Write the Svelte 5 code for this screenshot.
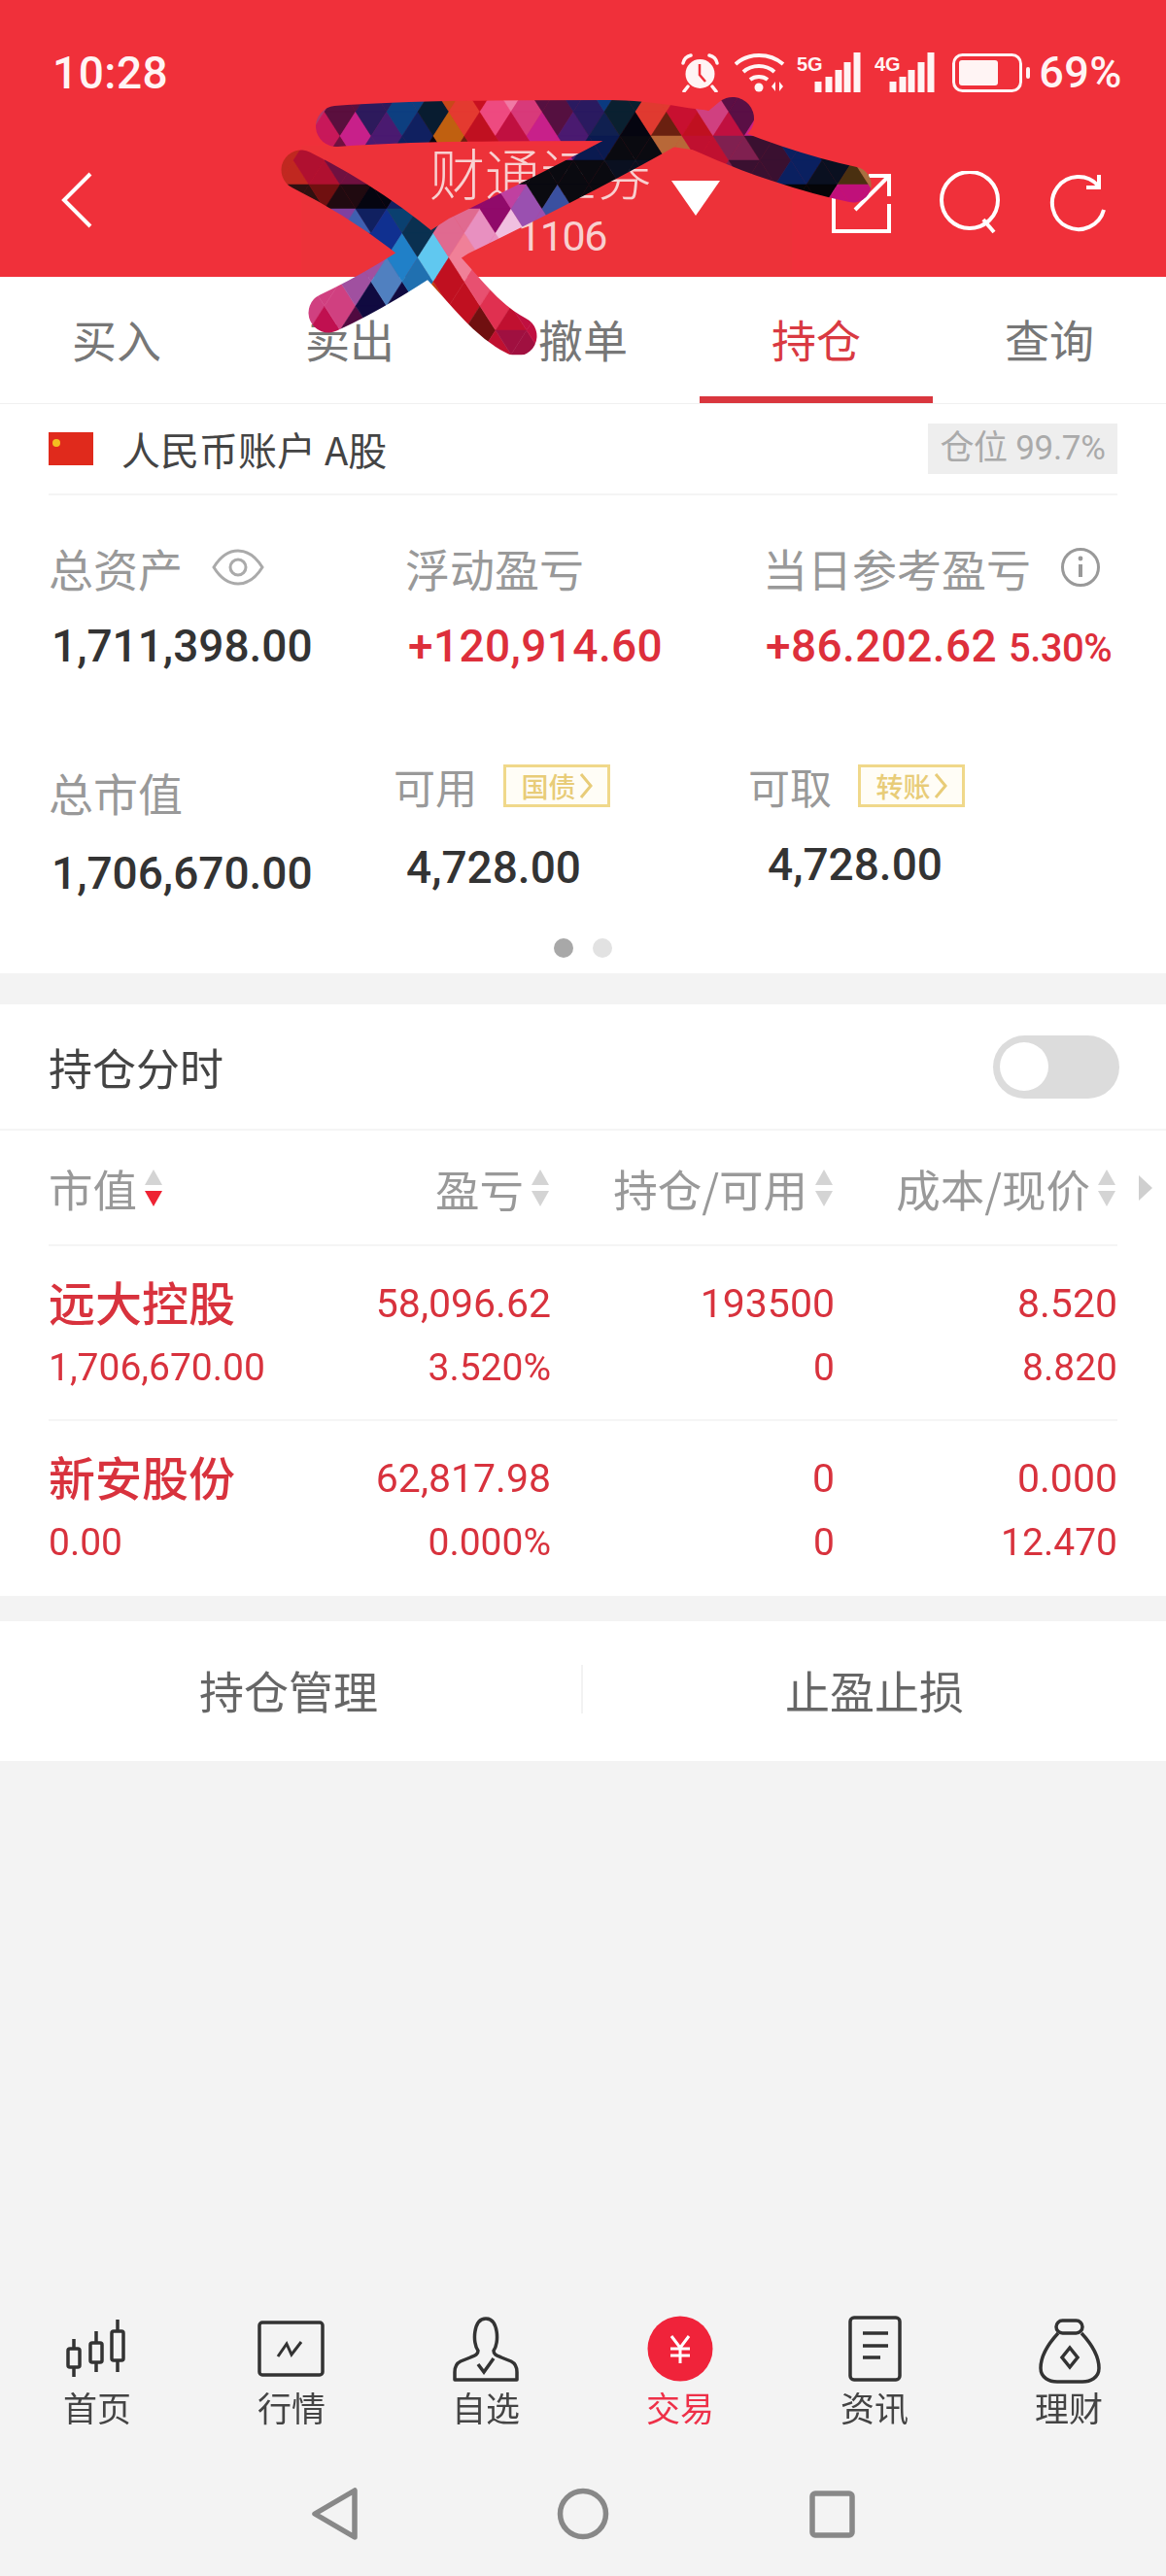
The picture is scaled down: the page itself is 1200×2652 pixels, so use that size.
<script>
  const tabs = [
    { label: '买入' }, { label: '卖出' }, { label: '撤单' }, { label: '持仓', active: true }, { label: '查询' }
  ];
  const rows = [
    { name: '远大控股', value: '1,706,670.00', a: '58,096.62', b: '3.520%', c: '193500', d: '0', e: '8.520', f: '8.820' },
    { name: '新安股份', value: '0.00', a: '62,817.98', b: '0.000%', c: '0', d: '0', e: '0.000', f: '12.470' }
  ];
  const bars5 = [[22, 85], [33, 80], [43, 73], [52, 65], [62, 55]];
  const bars4 = [[19, 85], [29, 80], [38, 73], [48, 65], [58, 55]];

  // Mosaic colours of the censoring scribble: [x, y, colour]
  const anchors = [
    [337,117,'#b03a6e'],[358,117,'#5a0f3e'],[388,117,'#2d1a5c'],[417,117,'#0d3f80'],[443,117,'#081c30'],[464,117,'#c8481a'],[480,117,'#e43a30'],[493,117,'#c81020'],[510,117,'#ee4a80'],[523,117,'#f07aa5'],[539,117,'#d83a7a'],[560,117,'#551040'],[590,117,'#2a1a60'],[624,117,'#0a3a80'],[649,117,'#0a2030'],[674,117,'#e03a30'],[700,117,'#c81030'],[733,117,'#d04080'],[758,117,'#5a0f45'],
    [337,137,'#c8185a'],[363,137,'#c8208a'],[388,137,'#4a1a70'],[417,137,'#102060'],[443,137,'#050510'],[464,137,'#c06010'],[480,137,'#6a2010'],[506,137,'#c01020'],[531,137,'#c01040'],[560,137,'#c8208a'],[590,137,'#4a1a70'],[624,137,'#102050'],[649,137,'#050510'],[666,137,'#c06010'],[691,137,'#6a2010'],[720,137,'#c01020'],[741,137,'#c01040'],[763,137,'#c8208a'],
    [758,152,'#802050'],[733,152,'#c01030'],[691,155,'#b86838'],[655,155,'#0a0a10'],[620,160,'#0a1a50'],
    [788,165,'#3a1030'],[817,165,'#0a2060'],[850,175,'#0a1020'],[860,190,'#050508'],[880,188,'#4a3010'],[893,188,'#a87040'],[872,205,'#c0107a'],
    [544,190,'#0a0a10'],[600,190,'#0a0a10'],[650,178,'#0a1020'],[497,215,'#900a6a'],[523,215,'#c040a0'],[544,215,'#9a50b0'],[573,215,'#3a50a0'],
    [468,240,'#e06a90'],[489,240,'#e890c0'],[531,240,'#f0c0e0'],[476,265,'#f08098'],[417,265,'#2080c8'],[447,265,'#60c8f0'],
    [367,290,'#a050a0'],[405,290,'#5080c0'],[430,290,'#2070b0'],[337,315,'#d04080'],[363,315,'#500a40'],[396,315,'#100a40'],[337,338,'#c01050'],
    [300,175,'#c02820'],[325,175,'#b01030'],[350,175,'#701040'],[308,195,'#301010'],[329,195,'#701010'],[354,195,'#200a10'],[379,195,'#050510'],
    [342,215,'#8040a0'],[367,215,'#4060b0'],[396,215,'#102060'],[384,240,'#103090'],[417,240,'#0a4070'],[438,240,'#0a3050'],
    [460,290,'#c01020'],[485,290,'#e85070'],[460,315,'#c04010'],[485,315,'#c01020'],[510,315,'#e03050'],[489,340,'#701010'],[514,340,'#c01030'],[540,340,'#c01040'],[531,360,'#a01040']
  ];
  function colourAt(x, y) {
    let best = anchors[0][2], bd = Infinity;
    for (const [ax, ay, c] of anchors) {
      const d = (ax - x) ** 2 + 2 * (ay - y) ** 2;
      if (d < bd) { bd = d; best = c; }
    }
    return best;
  }
  const tris = [];
  const W = 32, H = 25;
  for (let r = 0; r < 11; r++) {
    const y = 90 + r * H;
    const off = r % 2 ? W / 2 : 0;
    for (let i = -1; i < 22; i++) {
      const x = 270 + off + i * W;
      tris.push({ p: `${x},${y + H} ${x + W},${y + H} ${x + W / 2},${y}`, c: colourAt(x + W / 2, y + H * 0.6) });
      tris.push({ p: `${x + W / 2},${y} ${x + W * 1.5},${y} ${x + W},${y + H}`, c: colourAt(x + W, y + H * 0.4) });
    }
  }
</script>

{#snippet sort(active)}
  <svg class="sort" viewBox="0 0 22 40" width="22" height="40" aria-hidden="true">
    <polygon points="11,1 20,17 2,17" fill="#d4d4d4" />
    <polygon points="2,23 20,23 11,39" fill={active ? '#ee2233' : '#d4d4d4'} />
  </svg>
{/snippet}

{#snippet chevron()}
  <svg class="chev" width="14" height="28" viewBox="0 0 14 28" aria-hidden="true">
    <path d="M2 2 L12 14 L2 26" fill="none" stroke="#e8cc78" stroke-width="3" />
  </svg>
{/snippet}

<div class="page">
  <div class="content">
    <header class="top">
      <div class="status">
        <span class="time">10:28</span>
        <div class="status-right">
          <svg width="39" height="40" viewBox="0 0 39 40" class="s-alarm">
            <circle cx="19.5" cy="21" r="15" fill="#fff4f4" />
            <path d="M19 11 V22 L25 29" fill="none" stroke="#f0303a" stroke-width="2.5" />
            <path d="M2 10 C3 5 6 3 10 2 M37 10 C36 5 33 3 29 2 M7 34 L3 39 M32 34 L36 39" fill="none" stroke="#fff4f4" stroke-width="3.5" stroke-linecap="round" />
          </svg>
          <svg width="52" height="40" viewBox="0 0 52 40" class="s-wifi">
            <path d="M1 11 C14 -1 36 -1 50 11 M9 19 C18 11 32 11 41 19 M16 27 C21 23 29 23 34 27" fill="none" stroke="#fff4f4" stroke-width="4" />
            <circle cx="25" cy="35" r="4.5" fill="#fff4f4" />
            <path d="M42 29 L38 34 L42 39 Z M46 29 L50 34 L46 39 Z" fill="#fff4f4" />
          </svg>
          <svg width="66" height="42" viewBox="0 0 66 42" class="s-sig1">
            <text x="0" y="19" class="sigtext">5G</text>
            {#each bars5 as [x, t]}<rect x={x - 3.5} y={t - 55} width="7" height={96 - t} fill="#fff4f4" />{/each}
          </svg>
          <svg width="62" height="42" viewBox="0 0 62 42" class="s-sig2">
            <text x="0" y="19" class="sigtext">4G</text>
            {#each bars4 as [x, t]}<rect x={x - 3.5} y={t - 55} width="7" height={96 - t} fill="#fff4f4" />{/each}
          </svg>
          <svg width="82" height="40" viewBox="0 0 82 40" class="s-bat">
            <rect x="1.5" y="1.5" width="69" height="37" rx="9" fill="none" stroke="#fff4f4" stroke-width="3" />
            <rect x="7" y="7" width="40" height="26" rx="3" fill="#fff4f4" />
            <rect x="76" y="14" width="4" height="12" rx="2" fill="#fff4f4" />
          </svg>
          <span class="pct">69%</span>
        </div>
      </div>
      <div class="nav">
        <svg class="back" width="34" height="58" viewBox="0 0 34 58">
          <path d="M31 2 L4 29 L31 56" fill="none" stroke="#fff" stroke-width="4" />
        </svg>
        <div class="title">
          <div class="title-top">
            <span class="broker">财通证券</span>
            <svg width="54" height="40" viewBox="0 0 54 40"><polygon points="2,2 52,2 27,38" fill="#fff" /></svg>
          </div>
          <span class="acct">1106</span>
        </div>
        <div class="nav-icons">
          <svg width="62" height="62" viewBox="0 0 62 62">
            <path d="M34 12 H2 V60 H59 V32" fill="none" stroke="#fff" stroke-width="4" />
            <path d="M24 38 L58 4 M38 3 H59 V24" fill="none" stroke="#fff" stroke-width="4" />
          </svg>
          <svg width="66" height="66" viewBox="0 0 66 66">
            <circle cx="32" cy="30" r="29" fill="none" stroke="#fff" stroke-width="4" />
            <path d="M46 50 L57 63" stroke="#fff" stroke-width="4" />
          </svg>
          <svg width="60" height="62" viewBox="0 0 60 62">
            <path d="M56 38 A27 27 0 1 1 50 13" fill="none" stroke="#fff" stroke-width="4" />
            <path d="M51 2 V15 H38" fill="none" stroke="#fff" stroke-width="4" />
          </svg>
        </div>
      </div>
    </header>

    <nav class="tabs">
      {#each tabs as t}
        <div class="tab" class:active={t.active}>{t.label}</div>
      {/each}
    </nav>

    <section class="summary">
      <div class="account">
        <div class="acc-left">
          <svg width="46" height="34" viewBox="0 0 46 34">
            <rect width="46" height="34" fill="#e02a1c" />
            <circle cx="8" cy="11" r="4" fill="#f4c020" />
          </svg>
          <span>人民币账户 A股</span>
        </div>
        <span class="ratio">仓位 99.7%</span>
      </div>

      <div class="stat-row one">
        <div class="stat">
          <div class="label">总资产
            <svg class="eye" width="54" height="38" viewBox="0 0 54 38">
              <path d="M2 19 C10 6 18 2 27 2 C36 2 44 6 52 19 C44 32 36 36 27 36 C18 36 10 32 2 19 Z" fill="none" stroke="#aaa" stroke-width="3" />
              <circle cx="27" cy="19" r="8" fill="none" stroke="#aaa" stroke-width="3" />
            </svg>
          </div>
          <div class="num">1,711,398.00</div>
        </div>
        <div class="stat">
          <div class="label">浮动盈亏</div>
          <div class="num red">+120,914.60</div>
        </div>
        <div class="stat">
          <div class="label">当日参考盈亏
            <svg class="info" width="42" height="42" viewBox="0 0 42 42">
              <circle cx="21" cy="21" r="18.5" fill="none" stroke="#999" stroke-width="3" />
              <circle cx="21" cy="12" r="2.4" fill="#999" />
              <path d="M21 18 V31" stroke="#999" stroke-width="4" />
            </svg>
          </div>
          <div class="num red">+86.202.62 <small>5.30%</small></div>
        </div>
      </div>

      <div class="stat-row two">
        <div class="stat">
          <div class="label">总市值</div>
          <div class="num">1,706,670.00</div>
        </div>
        <div class="stat mid">
          <div class="label raised">可用 <span class="gold">国债{@render chevron()}</span></div>
          <div class="num nudge-a">4,728.00</div>
        </div>
        <div class="stat end">
          <div class="label raised">可取 <span class="gold">转账{@render chevron()}</span></div>
          <div class="num nudge-b">4,728.00</div>
        </div>
      </div>

      <div class="dots"><span class="dot on"></span><span class="dot"></span></div>
    </section>

    <section class="holdings">
      <div class="hold-head">
        <span>持仓分时</span>
        <div class="toggle"><span class="knob"></span></div>
      </div>
      <div class="table-head">
        <div class="cell left">市值{@render sort(true)}</div>
        <div class="cell">盈亏{@render sort(false)}</div>
        <div class="cell">持仓/可用{@render sort(false)}</div>
        <div class="cell">成本/现价{@render sort(false)}</div>
        <svg class="more" width="14" height="26" viewBox="0 0 14 26"><polygon points="0,0 14,13 0,26" fill="#cfcfcf" /></svg>
      </div>
      {#each rows as r}
        <div class="row">
          <div class="c1"><div class="name">{r.name}</div><div class="sub">{r.value}</div></div>
          <div class="c"><div>{r.a}</div><div class="sub">{r.b}</div></div>
          <div class="c"><div>{r.c}</div><div class="sub">{r.d}</div></div>
          <div class="c"><div>{r.e}</div><div class="sub">{r.f}</div></div>
        </div>
      {/each}
    </section>

    <section class="actions">
      <div class="action">持仓管理</div>
      <div class="action">止盈止损</div>
    </section>

    <div class="foot">
      <nav class="bottom">
        <div class="item">
          <svg width="80" height="70" viewBox="0 0 80 70">
            <g fill="none" stroke="#333" stroke-width="3.5">
              <path d="M16 24 V34 M16 53 V63 M39 16 V28 M39 48 V58 M61 4 V16 M61 46 V58" />
              <rect x="10" y="34" width="12" height="19" rx="2" />
              <rect x="33" y="28" width="12" height="20" rx="2" />
              <rect x="55" y="16" width="12" height="30" rx="2" />
            </g>
          </svg>
          <span>首页</span>
        </div>
        <div class="item">
          <svg width="80" height="70" viewBox="0 0 80 70">
            <rect x="7" y="7" width="65" height="54" rx="3" fill="none" stroke="#333" stroke-width="3.5" />
            <path d="M26 42 L35 29 L40 40 L50 27" fill="none" stroke="#333" stroke-width="3" />
          </svg>
          <span>行情</span>
        </div>
        <div class="item">
          <svg width="80" height="70" viewBox="0 0 80 70">
            <path d="M32 36 C26 28 27 3 40 3 C53 3 54 28 48 36 C48 40 51 41 56 43 L66 47 C70 49 72 52 72 58 V66 H8 V58 C8 52 10 49 14 47 L24 43 C29 41 32 40 32 36 Z" fill="none" stroke="#333" stroke-width="3.5" stroke-linejoin="round" />
            <path d="M32 50 L38 58 L48 44" fill="none" stroke="#333" stroke-width="3.5" />
          </svg>
          <span>自选</span>
        </div>
        <div class="item active">
          <svg width="80" height="70" viewBox="0 0 80 70">
            <circle cx="40" cy="34" r="33.5" fill="#f0233a" />
            <path d="M31 21 L40 33 L49 21 M30 34 H50 M30 41 H50 M40 33 V49" fill="none" stroke="#fff" stroke-width="3" />
          </svg>
          <span>交易</span>
        </div>
        <div class="item">
          <svg width="80" height="70" viewBox="0 0 80 70">
            <rect x="15" y="2" width="51" height="64" rx="4" fill="none" stroke="#333" stroke-width="3.5" />
            <path d="M28 18 H54 M28 31 H54 M28 43 H46" stroke="#333" stroke-width="3.5" />
          </svg>
          <span>资讯</span>
        </div>
        <div class="item">
          <svg width="80" height="70" viewBox="0 0 80 70">
            <rect x="27" y="5" width="27" height="13" rx="6.5" fill="none" stroke="#333" stroke-width="3.5" />
            <path d="M29 18 C16 32 11 44 11 54 C11 64 20 68 28 68 H54 C62 68 71 64 71 54 C71 44 66 32 53 18" fill="none" stroke="#333" stroke-width="3.5" />
            <polygon points="41,33 49,43 41,53 33,43" fill="none" stroke="#333" stroke-width="3.5" />
          </svg>
          <span>理财</span>
        </div>
      </nav>
      <div class="sysbar">
        <svg width="60" height="60" viewBox="0 0 60 60">
          <path d="M51 6 V54 L10 30 Z" fill="none" stroke="#888" stroke-width="5.5" stroke-linejoin="round" />
        </svg>
        <svg width="60" height="60" viewBox="0 0 60 60">
          <circle cx="30" cy="30" r="23.5" fill="none" stroke="#888" stroke-width="5.5" />
        </svg>
        <svg width="60" height="60" viewBox="0 0 60 60">
          <rect x="10" y="9" width="41" height="43" rx="3" fill="none" stroke="#888" stroke-width="5.5" />
        </svg>
      </div>
    </div>
  </div>

  <svg class="scribble" width="1200" height="400" viewBox="0 0 1200 400" aria-hidden="true">
    <defs>
      <mask id="ink" maskUnits="userSpaceOnUse" x="0" y="0" width="1200" height="400">
        <g fill="none" stroke="#fff" stroke-linecap="round" stroke-linejoin="round">
          <path d="M346 130 C420 124 540 124 628 124 C670 124 700 132 722 134" stroke-width="42" />
          <path d="M754 122 L735 138" stroke-width="44" />
          <path d="M722 138 C770 160 830 180 878 190" stroke-width="37" />
          <path d="M690 130 C620 170 540 210 472 243 C430 270 390 298 338 322" stroke-width="41" />
          <path d="M310 175 C350 195 400 225 451 270 C480 300 500 330 532 346" stroke-width="41" />
        </g>
      </mask>
    </defs>
    <g mask="url(#ink)">
      {#each tris as t}<polygon points={t.p} fill={t.c} stroke={t.c} stroke-width="0.5" />{/each}
    </g>
  </svg>
</div>

<style>
  :global(body) {
    margin: 0;
    background: #f3f3f3;
  }
  .page {
    position: relative;
    width: 1200px;
    height: 2652px;
    overflow: hidden;
    font-family: Roboto, "Noto Sans CJK SC", sans-serif;
    background: #f3f3f3;
  }
  .content {
    display: flex;
    flex-direction: column;
    height: 2652px;
    filter: blur(0.7px);
  }
  .top {
    height: 285px;
    background: #f0303a;
    color: #fff;
    flex: none;
  }
  .status {
    height: 150px;
    display: flex;
    align-items: center;
    justify-content: space-between;
    padding: 0 45px 0 54px;
    box-sizing: border-box;
  }
  .time {
    font-size: 46px;
    font-weight: 500;
    color: #fff4f4;
    letter-spacing: 0.5px;
  }
  .status-right {
    display: flex;
    align-items: center;
    color: #fff4f4;
  }
  .s-alarm { margin-right: 2px; }
  .s-wifi { margin-left: 14px; }
  .s-sig1 { margin-left: 12px; }
  .s-sig2 { margin-left: 14px; }
  .s-bat { margin-left: 18px; }
  .sigtext {
    font: 700 20px "Liberation Sans", sans-serif;
    fill: #fff4f4;
  }
  .pct {
    margin-left: 7px;
    font-size: 45px;
    font-weight: 500;
    letter-spacing: 0.5px;
    line-height: 40px;
  }
  .nav {
    height: 135px;
    display: flex;
    align-items: flex-start;
  }
  .back {
    margin: 27px 0 0 62px;
    flex: none;
  }
  .title {
    margin-left: 214px;
    width: 505px;
    height: 135px;
    box-sizing: border-box;
    padding-left: 132px;
    background: #ed3239;
    flex: none;
    display: flex;
    flex-direction: column;
    color: #f8d0d0;
  }
  .title-top {
    display: flex;
    align-items: center;
    height: 56px;
    margin-top: -2px;
    gap: 19px;
  }
  .broker {
    font: 300 57px/56px "Noto Sans CJK SC", sans-serif;
    white-space: nowrap;
  }
  .title-top svg {
    margin-top: 56px;
  }
  .acct {
    margin: 18px 0 0 91px;
    font: 400 43px/42px Roboto, sans-serif;
    letter-spacing: -1.4px;
  }
  .nav-icons {
    margin-left: auto;
    padding-right: 60px;
    display: flex;
    align-items: center;
    gap: 48px;
    margin-top: 26px;
  }
  .tabs {
    height: 130px;
    flex: none;
    display: grid;
    grid-template-columns: repeat(5, 240px);
    background: #fff;
    border-bottom: 1px solid #f0f0f0;
    font: 400 46px/127px "Noto Sans CJK SC", sans-serif;
    color: #777;
    text-align: center;
  }
  .tab {
    box-sizing: border-box;
    height: 130px;
  }
  .tab.active {
    color: #d93a42;
    border-bottom: 7px solid #d9363e;
  }
  .summary {
    background: #fff;
    height: 586px;
    flex: none;
    box-sizing: border-box;
  }
  .account {
    margin: 0 50px;
    height: 94px;
    display: flex;
    align-items: center;
    justify-content: space-between;
    border-bottom: 2px solid #f4f4f4;
    box-sizing: border-box;
  }
  .acc-left {
    display: flex;
    align-items: center;
    gap: 29px;
    font: 400 40px "Noto Sans CJK SC", sans-serif;
    color: #444;
  }
  .ratio {
    background: #eeeeee;
    color: #aaa;
    font: 400 35px/52px Roboto, "Noto Sans CJK SC", sans-serif;
    width: 195px;
    text-align: center;
    white-space: nowrap;
    letter-spacing: -0.3px;
  }
  .stat-row {
    display: grid;
    grid-template-columns: 367px 368px 1fr;
    padding-left: 50px;
  }
  .one { margin-top: 49px; }
  .two { margin-top: 100px; }
  .label {
    display: flex;
    align-items: center;
    gap: 30px;
    height: 50px;
    font: 400 46px/50px "Noto Sans CJK SC", sans-serif;
    color: #999;
    white-space: nowrap;
  }
  .num {
    margin-top: 31px;
    height: 50px;
    font: 500 46px/50px Roboto, sans-serif;
    letter-spacing: 0;
    color: #333;
    white-space: nowrap;
  }
  .two .num {
    margin-top: 34px;
  }
  .num.red {
    color: #dd2f3b;
    letter-spacing: 0.4px;
  }
  .num small {
    font-size: 40px;
    letter-spacing: -0.5px;
  }
  .stat .num { margin-left: 3px; }
  .mid { margin-left: -12px; }
  .end { margin-left: -15px; }
  .raised {
    margin-top: -6px;
    margin-bottom: 6px;
    gap: 27px;
    font-size: 43px;
  }
  .nudge-a { margin-left: 13px !important; }
  .nudge-b {
    margin-left: 20px !important;
    position: relative;
    top: -3px;
  }
  .gold {
    display: inline-flex;
    align-items: center;
    justify-content: center;
    gap: 3px;
    box-sizing: border-box;
    width: 110px;
    height: 44px;
    border: 3px solid #f0d88a;
    font-size: 28px;
    font-weight: 500;
    color: #e8cc78;
    background: #fffdf6;
    white-space: nowrap;
  }
  .dots {
    margin-top: 42px;
    display: flex;
    justify-content: center;
    gap: 20px;
  }
  .dot {
    width: 20px;
    height: 20px;
    border-radius: 50%;
    background: #e2e2e2;
  }
  .dot.on {
    background: #a8a8a8;
  }
  .holdings {
    margin-top: 32px;
    background: #fff;
    flex: none;
  }
  .hold-head {
    height: 130px;
    display: flex;
    align-items: center;
    justify-content: space-between;
    padding: 0 48px 0 50px;
    font: 400 45px "Noto Sans CJK SC", sans-serif;
    color: #444;
    border-bottom: 2px solid #f5f5f5;
    box-sizing: border-box;
  }
  .toggle {
    width: 130px;
    height: 65px;
    border-radius: 33px;
    background: #dcdcdc;
    display: flex;
    align-items: center;
    padding-left: 7px;
    box-sizing: border-box;
  }
  .knob {
    width: 50px;
    height: 50px;
    border-radius: 50%;
    background: #fff;
  }
  .table-head, .row {
    display: grid;
    grid-template-columns: 232px 285px 292px 291px;
    margin: 0 50px;
    box-sizing: border-box;
  }
  .table-head {
    position: relative;
    height: 119px;
    align-items: center;
    border-bottom: 2px solid #f5f5f5;
    font: 400 45.5px "Noto Sans CJK SC", sans-serif;
    color: #999;
  }
  .cell {
    display: flex;
    align-items: center;
    justify-content: flex-end;
    gap: 6px;
    white-space: nowrap;
  }
  .cell.left {
    justify-content: flex-start;
  }
  .more {
    position: absolute;
    right: -36px;
    top: 46px;
  }
  .row {
    height: 180px;
    padding-top: 26px;
    border-bottom: 2px solid #f5f5f5;
    font: 400 41px/66px Roboto, sans-serif;
    color: #d8323d;
    text-align: right;
  }
  .row:last-child {
    border-bottom: none;
  }
  .c1 {
    text-align: left;
  }
  .name {
    font: 500 48px/66px "Noto Sans CJK SC", sans-serif;
    margin-top: -3px;
    margin-bottom: 3px;
    white-space: nowrap;
  }
  .sub {
    font-size: 39px;
  }
  .actions {
    margin-top: 26px;
    height: 144px;
    flex: none;
    background: #fff;
    display: grid;
    grid-template-columns: 600px 600px;
    align-items: center;
    text-align: center;
    padding-bottom: 4px;
    box-sizing: border-box;
    font: 400 46px/50px "Noto Sans CJK SC", sans-serif;
    color: #666;
  }
  .action:first-child {
    border-right: 2px solid #f2f2f2;
    box-sizing: border-box;
    padding-right: 4px;
  }
  .foot {
    margin-top: auto;
    height: 268px;
    flex: none;
  }
  .bottom {
    display: grid;
    grid-template-columns: repeat(6, 200px);
  }
  .item {
    display: flex;
    flex-direction: column;
    align-items: center;
    font: 400 35px/40px "Noto Sans CJK SC", sans-serif;
    color: #444;
  }
  .item svg {
    margin-bottom: 4px;
  }
  .item.active {
    color: #ee3048;
  }
  .sysbar {
    margin-top: 60px;
    display: flex;
    justify-content: center;
    gap: 196px;
  }
  .scribble {
    position: absolute;
    top: 0;
    left: 0;
    pointer-events: none;
  }
</style>
